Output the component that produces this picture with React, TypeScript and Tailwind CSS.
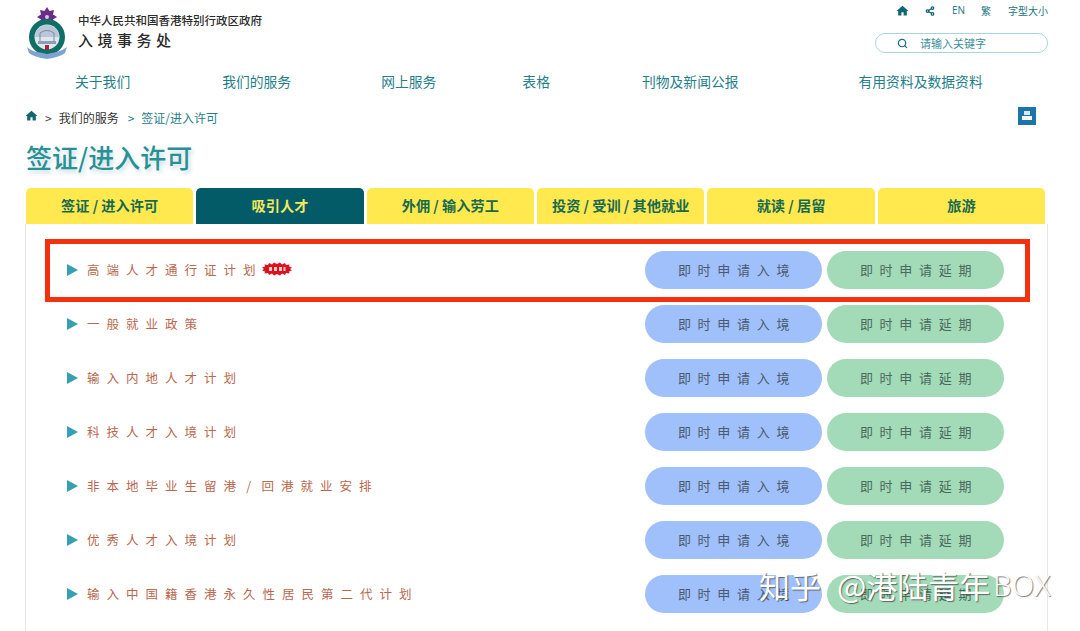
import React from 'react';
import { Search, Share2 } from 'lucide-react';

const cjk = "font-['Noto_Sans_CJK_SC','Noto_Sans',sans-serif]";

const tabs = ['签证 / 进入许可', '吸引人才', '外佣 / 输入劳工', '投资 / 受训 / 其他就业', '就读 / 居留', '旅游'];

const schemes = [
  '高端人才通行证计划',
  '一般就业政策',
  '输入内地人才计划',
  '科技人才入境计划',
  '非本地毕业生留港 / 回港就业安排',
  '优秀人才入境计划',
  '输入中国籍香港永久性居民第二代计划',
];

const HomeIcon = ({ size }: { size: number }) => (
  <svg width={size} height={size} viewBox="0 0 24 24" fill="#0f6672">
    <path d="M12 3 1 13h3v8h6v-6h4v6h6v-8h3z" />
  </svg>
);

const Emblem = () => (
  <svg width="42" height="56" viewBox="0 0 42 56">
    <path d="M21 4l2.500 4 4.500-1-1 4.500 4 2.500-4 2.500 1 4-4.500-1-2.500 3.500-2.500-3.500-4.500 1 1-4-4-2.500 4-2.500-1-4.500 4.500 1z" fill="#6b2c86" />
    <circle cx="21" cy="14" r="2" fill="#d9c6e6" />
    <circle cx="21" cy="34" r="18" fill="#0f6f66" />
    <circle cx="21" cy="34" r="12.500" fill="#dfe6ee" />
    <path d="M9 34a12 12 0 0 1 24 0z" fill="#b9c7d8" />
    <path d="M12 38h18v3H12z" fill="#8d9db3" />
    <path d="M14 30v8M28 30v8M14 30q7-5 14 0" stroke="#7b8ca0" strokeWidth="1" fill="none" />
    <path d="M19 42h4v5h-4z" fill="#a3263c" />
    <path d="M1 44q4 4 10 5t10 2q5-1 10-2t10-5l-2 6q-5 4-18 6q-13-2-18-6z" fill="#7fa3d0" />
  </svg>
);

const NewBadge = () => (
  <svg width="30" height="14" viewBox="0 0 30 14" className="-ml-[1px] -mt-[2px]">
    <path
      d="M2 7 0 5.500 3 4.500 2.500 2.500 6 3 7 1 10 2.500 12 .5 15 2 18 .5 20 2.500 23 1 24 3 27.500 2.500 27 4.500 30 5.500 28 7 30 8.500 27 9.500 27.500 11.500 24 11 23 13 20 11.500 18 13.500 15 12 12 13.500 10 11.500 7 13 6 11 2.500 11.500 3 9.500 0 8.500z"
      fill="#d9121f"
    />
    <path d="M7 5h3v4H7zM12 5h3v4h-3zM17 5h3v4h-3zM21.500 5h2v4h-2z" fill="#f6c9c9" />
  </svg>
);

const App = () => {
  return (
    <div className={`relative w-[1080px] h-[631px] overflow-hidden bg-white ${cjk}`}>
      {/* Header */}
      <div className="flex justify-between pl-[26px] pr-[32px] h-[69px]">
        <div className="flex pt-[3px]">
          <Emblem />
          <div className="ml-[10px] pt-[9px] text-[#2b2b2b]">
            <div className="text-[11.500px] leading-[16px] font-medium">中华人民共和国香港特别行政区政府</div>
            <div className="text-[15px] leading-[24px] font-medium tracking-[4.500px]">入境事务处</div>
          </div>
        </div>
        <div className="flex flex-col items-end pt-[3px]">
          <div className="flex items-center h-[15px] text-[10px] text-[#1c7480]">
            <HomeIcon size={13} />
            <Share2 size={10} strokeWidth={3} color="#0f6672" className="ml-[16px]" />
            <span className="ml-[17px] font-['Open_Sans',sans-serif]">EN</span>
            <span className="ml-[16px]">繁</span>
            <span className="ml-[17px]">字型大小</span>
          </div>
          <div className="flex items-center w-[173px] h-[20px] mt-[15px] pl-[21px] border border-[#a8d5dc] rounded-full text-[11px] text-[#3a8f9a]">
            <Search size={11} strokeWidth={2.5} color="#146c78" />
            <span className="ml-[12px]">请输入关键字</span>
          </div>
        </div>
      </div>

      {/* Main nav */}
      <nav className="flex h-[24px] items-center pl-[75px] text-[13.800px] text-[#1f8088] whitespace-nowrap">
        <span>关于我们</span>
        <span className="ml-[92px]">我们的服务</span>
        <span className="ml-[90px]">网上服务</span>
        <span className="ml-[86px]">表格</span>
        <span className="ml-[92px]">刊物及新闻公报</span>
        <span className="ml-[120px]">有用资料及数据资料</span>
      </nav>

      {/* Breadcrumb */}
      <div className="flex justify-between items-center mt-[13px] h-[24px] pl-[25px] pr-[44px]">
        <div className="flex items-center text-[12px]">
          <span className="-mt-[5px]">
            <HomeIcon size={13} />
          </span>
          <span className="ml-[7px] text-[#444]">&gt;</span>
          <span className="ml-[7px] text-[#333]">我们的服务</span>
          <span className="ml-[9px] text-[#1f8088]">&gt;</span>
          <span className="ml-[7px] text-[#1f8088]">签证/进入许可</span>
        </div>
        <div className="flex items-center justify-center w-[18px] h-[18px] -mt-[4px] bg-[#1c74a8]">
          <svg width="12" height="12" viewBox="0 0 12 12">
            <path d="M3 1h6v4H3z" fill="#dce8f0" />
            <path d="M1 6h10v4H1z" fill="#f4f8fb" />
          </svg>
        </div>
      </div>

      {/* Page title */}
      <h1 className="mt-[10px] h-[32px] pl-[26px] text-[26px] leading-[34px] font-medium text-[#2a9096] [text-shadow:2px_3px_4px_rgba(40,120,130,0.25)]">
        签证/进入许可
      </h1>

      {/* Tabs */}
      <div className="flex gap-[3.200px] mt-[16px] ml-[26px] w-[1019px] h-[36px]">
        {tabs.map((tab, i) => (
          <div
            key={tab}
            className={`flex flex-1 items-center justify-center rounded-t-[5px] text-[14.200px] font-bold ${
              i === 1 ? 'bg-[#045b68] text-[#f5e85c]' : 'bg-[#ffe94f] text-[#17694f]'
            }`}
          >
            {tab}
          </div>
        ))}
      </div>

      {/* Panel */}
      <div className="ml-[25px] w-[1023px] h-[420px] border-x border-[#e4e8ea] pt-[19px]">
        {schemes.map((name, i) => (
          <div key={name} className="flex items-center h-[54px] pl-[41px]">
            <svg width="11" height="12" viewBox="0 0 11 12">
              <path d="M0 0l11 6-11 6z" fill="#35a0b4" />
            </svg>
            <div className="flex flex-1 items-center ml-[9px] text-[12.500px] tracking-[7px] [word-spacing:-6.500px] text-[#b9684e]">
              {name}
              {i === 0 && <NewBadge />}
            </div>
            <div className="flex items-center justify-center w-[177px] h-[38px] pl-[7px] rounded-full bg-[#a0c0fb] text-[13px] tracking-[6.700px] text-[#4a5a6e]">
              即时申请入境
            </div>
            <div className="flex items-center justify-center w-[177px] h-[38px] pl-[7px] ml-[5px] mr-[43px] rounded-full bg-[#a3dab8] text-[13px] tracking-[6.700px] text-[#4a6a5e]">
              即时申请延期
            </div>
          </div>
        ))}
      </div>

      {/* Red highlight drawn on top of the screenshot */}
      <div className="absolute left-[45px] top-[239px] w-[985px] h-[63px] border-[5px] border-[#f5300f]" />

      {/* Watermark */}
      <div className="absolute left-[759px] top-[566px] flex items-center leading-[38px] whitespace-nowrap text-white [text-shadow:1px_1px_1px_rgba(70,70,70,0.75)]">
        <span className="text-[31px]">知乎</span>
        <span className="ml-[16px] text-[31px]">@港陆青年</span>
        <span className="ml-[3px] text-[29px] font-light tracking-[0.500px] font-['Open_Sans',sans-serif]">BOX</span>
      </div>
    </div>
  );
};

export default App;
